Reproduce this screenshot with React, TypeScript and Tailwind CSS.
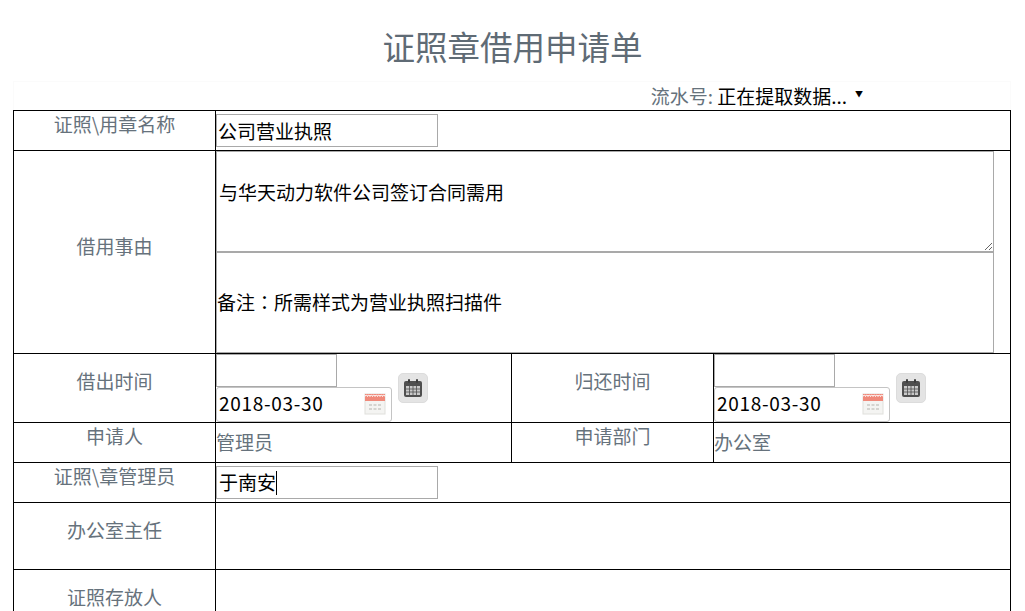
const fontStack = 'font-["Noto_Sans_CJK_SC","Liberation_Sans",sans-serif]';

function PickerIcon() {
    return (
        <svg width="22" height="22" viewBox="0 0 22 22" className="absolute right-[5px] top-[5px]">
            <rect x="1" y="1" width="20" height="20" fill="#f4f4f2" stroke="#e0e0dc" />
            <rect x="1" y="1" width="20" height="7" fill="#f0897a" />
            <path d="M1 3.5a1.2 1.2 0 0 1 2.5 0a1.2 1.2 0 0 1 2.5 0a1.2 1.2 0 0 1 2.5 0a1.2 1.2 0 0 1 2.5 0a1.2 1.2 0 0 1 2.5 0a1.2 1.2 0 0 1 2.5 0a1.2 1.2 0 0 1 2.5 0a1.2 1.2 0 0 1 2.5 0" fill="none" stroke="#fff" strokeWidth="1" />
            <path d="M5 11h3v2H5zM9.5 11h3v2h-3zM14 11h3v2h-3zM5 15h3v2H5zM9.5 15h3v2h-3zM14 15h3v2h-3z" fill="#d4d4d0" />
        </svg>
    );
}

function CalendarButton() {
    return (
        <div className="ml-[6px] mb-[19px] flex h-[30px] w-[30px] items-center justify-center rounded-[5px] border border-[#dcdcdc] bg-[#e4e4e4]">
            <svg width="20" height="20" viewBox="0 0 20 20">
                <rect x="1" y="3" width="18" height="16" rx="2" fill="#4f4f4f" />
                <rect x="5" y="1" width="2" height="4" rx="1" fill="#3c3c3c" />
                <rect x="13" y="1" width="2" height="4" rx="1" fill="#3c3c3c" />
                <path d="M3 8h14v9H3z" fill="#c9c9c9" />
                <path d="M3 11h14M3 14h14M6.5 8v9M10 8v9M13.5 8v9" stroke="#4f4f4f" strokeWidth="0.8" />
            </svg>
        </div>
    );
}

function DateField() {
    return (
        <div className="flex items-end">
            <div className="flex flex-col">
                <input readOnly className="h-[33px] w-[121px] border border-[#a9a9a9] bg-white outline-none" />
                <div className="relative flex h-[35px] w-[176px] items-center rounded-[3px] border border-[#c4c4c4] bg-white pb-[3px] pl-[2px] text-[19px] tracking-[0.7px] text-black">
                    2018-03-30
                    <PickerIcon />
                </div>
            </div>
            <CalendarButton />
        </div>
    );
}

export default function App() {
    const cell = 'border border-black p-0 align-top';
    const label = `${cell} text-center text-[19px] leading-[24px] text-[#66727c]`;
    const plain = `${cell} pt-[6px] text-[19px] leading-[26px] text-[#66727c]`;

    return (
        <div className={`h-[611px] overflow-hidden bg-white ${fontStack}`}>
            <h1 className="h-[81px] pt-[21px] text-center text-[32.5px] leading-[50px] font-normal text-[#5f6b75]">
                证照章借用申请单
            </h1>

            <div className="ml-[13px] flex h-[29px] w-[998px] items-center justify-end border border-b-0 border-[#fbfbfb] pr-[163px] text-[19px] text-[#66727c]">
                流水号:
                <span className="ml-[4px] text-black">正在提取数据...</span>
                <span className="relative w-0">
                    <span className="absolute left-[8px] top-[-8px] text-[8px] text-black">▼</span>
                </span>
            </div>

            <table className="ml-[13px] w-[998px] table-fixed border-collapse">
                <colgroup>
                    <col className="w-[202px]" />
                    <col className="w-[296px]" />
                    <col className="w-[202px]" />
                    <col />
                </colgroup>
                <tbody>
                    <tr className="h-[40px]">
                        <td className={`${label} pt-[1px]`}>证照\用章名称</td>
                        <td colSpan={3} className={`${cell} pt-[3px]`}>
                            <input
                                readOnly
                                value="公司营业执照"
                                className="block h-[33px] w-[222px] border border-[#a9a9a9] pb-[1px] pl-[1px] text-[19px] text-black outline-none"
                            />
                        </td>
                    </tr>
                    <tr className="h-[203px]">
                        <td className={`${label} pt-[83px]`}>借用事由</td>
                        <td colSpan={3} className={cell}>
                            <textarea
                                readOnly
                                value="与华天动力软件公司签订合同需用"
                                className="block h-[101px] w-[778px] resize border border-[#a9a9a9] pt-[27px] pl-[2px] text-[19px] leading-[26px] text-black outline-none"
                            />
                            <div className="flex h-[101px] w-[778px] items-center border border-[#a9a9a9] text-[19px] text-black">
                                <span>
                                    备注<span className='font-["Noto_Sans_CJK_TC",sans-serif]'>：</span>所需样式为营业执照扫描件
                                </span>
                            </div>
                        </td>
                    </tr>
                    <tr className="h-[69px]">
                        <td className={`${label} pt-[15px]`}>借出时间</td>
                        <td className={cell}>
                            <DateField />
                        </td>
                        <td className={`${label} pt-[15px]`}>归还时间</td>
                        <td className={cell}>
                            <DateField />
                        </td>
                    </tr>
                    <tr className="h-[40px]">
                        <td className={`${label} pt-[1px]`}>申请人</td>
                        <td className={plain}>管理员</td>
                        <td className={`${label} pt-[1px]`}>申请部门</td>
                        <td className={plain}>办公室</td>
                    </tr>
                    <tr className="h-[40px]">
                        <td className={`${label} pt-[1px]`}>证照\章管理员</td>
                        <td colSpan={3} className={`${cell} pt-[3px]`}>
                            <div className="flex h-[33px] w-[222px] items-center border border-[#a9a9a9] pl-[2px] text-[19px] text-black">
                                于南安
                                <span className="h-[24px] w-px bg-black" />
                            </div>
                        </td>
                    </tr>
                    <tr className="h-[67px]">
                        <td className={`${label} pt-[15px]`}>办公室主任</td>
                        <td colSpan={3} className={cell} />
                    </tr>
                    <tr className="h-[67px]">
                        <td className={`${label} pt-[15px]`}>证照存放人</td>
                        <td colSpan={3} className={cell} />
                    </tr>
                </tbody>
            </table>
        </div>
    );
}
